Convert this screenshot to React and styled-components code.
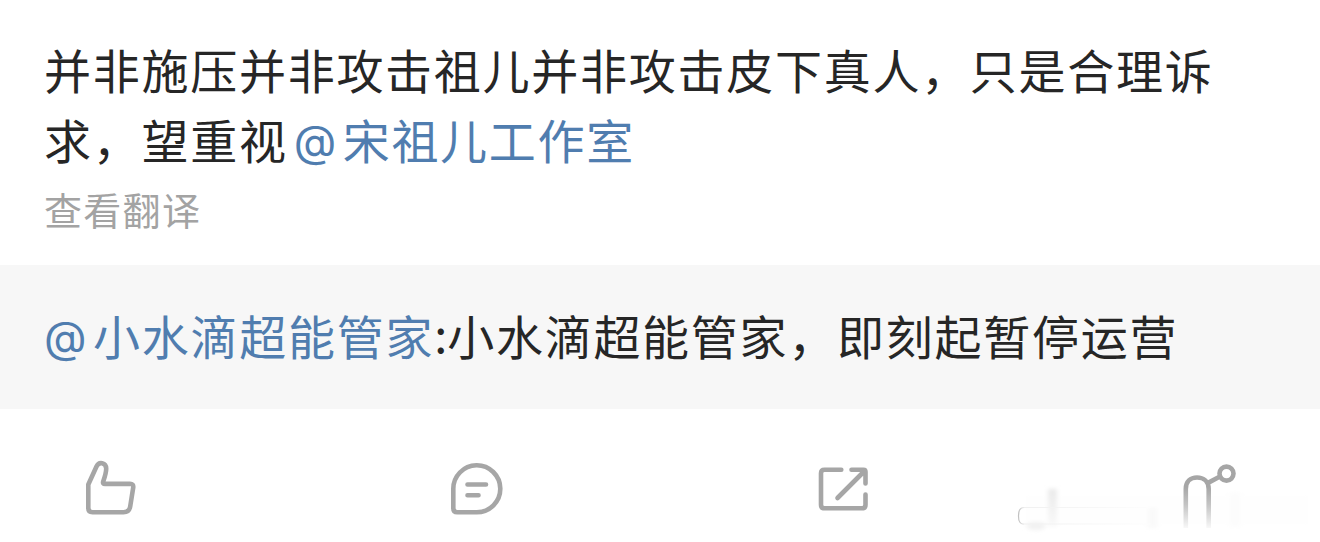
import React from "react";
import styled, { createGlobalStyle } from "styled-components";


const App = () => {
    return (
        <>
            <GlobalStyle/>
            <Post>
                <Content>
                    <Text>并非施压并非攻击祖儿并非攻击皮下真人，只是合理诉<br/>
                        求，望重视<Mention><At>@</At>宋祖儿工作室</Mention>
                    </Text>
                    <Translate>查看翻译</Translate>
                </Content>
                <Quote>
                    <Text>
                        <Mention><At $first>@</At>小水滴超能管家</Mention><Colon>:</Colon>小水滴超能管家，即刻起暂停运营
                    </Text>
                </Quote>
                <Actions>
                    <LikeIcon/>
                    <CommentIcon/>
                    <ShareIcon/>
                    <MoreIcon/>
                </Actions>
            </Post>
        </>
    )
}

//icons
const LikeIcon = () => (
    <Icon $width={80} viewBox="0 0 80 80">
        <path d="M18.3 34.5 L26.5 16.5 C29 11 36 12.5 36.2 18.5 C36.3 22.5 34.8 27 33.2 31.5 Q32.4 33.9 35 33.9 H60 Q63.8 33.9 63.2 37.6 L60.2 56.5 Q59.2 62.2 53.5 62.2 H22.5 Q18.3 62.2 18.3 58 Z"/>
    </Icon>
)

const CommentIcon = () => (
    <Icon $width={80} viewBox="0 0 80 80">
        <path d="M17.3 39.3 A23.5 23.5 0 1 1 40.8 62.3 H21.3 Q17.3 62.3 17.3 58.3 Z"/>
        <path d="M31.5 34.5 H50 M31.5 45.2 H42.5"/>
    </Icon>
)

const ShareIcon = () => (
    <Icon $width={80} viewBox="0 0 80 80">
        <path d="M38.3 19.8 H21.5 Q18 19.8 18 23.3 V54.8 Q18 58.3 21.5 58.3 H59 Q62.5 58.3 62.5 54.8 V44.5"/>
        <path d="M48.5 19.8 H60.5 Q62.5 19.8 62.5 21.8 V33.5 M61.5 21 L34.5 48"/>
    </Icon>
)

//the lower part fades out under a washed out watermark
const MoreIcon = () => (
    <Icon $width={320} viewBox="0 0 320 92">
        <defs>
            <linearGradient id="fade" gradientUnits="userSpaceOnUse" x1="0" y1="25" x2="0" y2="79">
                <stop offset="0.22" stopColor="#a6a6a6"/>
                <stop offset="0.55" stopColor="#c4c4c4"/>
                <stop offset="1" stopColor="#fafafa"/>
            </linearGradient>
            <linearGradient id="stem" x1="0" y1="0" x2="0" y2="1">
                <stop offset="0" stopColor="#e9e9e9"/>
                <stop offset="1" stopColor="#fafafa"/>
            </linearGradient>
            <linearGradient id="line" gradientUnits="userSpaceOnUse" x1="18" y1="0" x2="150" y2="0">
                <stop offset="0" stopColor="#bdbdbd"/>
                <stop offset="0.05" stopColor="#f0f0f0"/>
                <stop offset="1" stopColor="#fdfdfd"/>
            </linearGradient>
            <filter id="soft" x="-20%" y="-20%" width="140%" height="140%">
                <feGaussianBlur stdDeviation="2"/>
            </filter>
        </defs>
        <g stroke="none" filter="url(#soft)">
            <rect x="24" y="44" width="286" height="32" fill="#fefefe"/>
            <rect x="48" y="39" width="9" height="38" fill="url(#stem)"/>
            <ellipse cx="36" cy="76" rx="10" ry="4" fill="#f1f1f1"/>
            <rect x="148" y="58" width="9" height="20" fill="#f9f9f9"/>
            <rect x="230" y="42" width="10" height="35" fill="#fcfcfc"/>
        </g>
        <WatermarkLine d="M150 57.5 H24 Q18.5 57.5 18.5 66 T24 74 H150"/>
        <FadedStroke d="M185.8 78 V39 C185.8 31.5 190.5 27.5 197 27.5 S208.7 31.5 208.7 39 V78"/>
        <path d="M208.5 32.6 L219.5 26.8"/>
        <circle cx="226.5" cy="23.6" r="7"/>
    </Icon>
)


//styling
const GlobalStyle = createGlobalStyle`
    body {
        margin: 0;
        background-color: #fff;
        overflow: hidden;
    }
`
const Post = styled.div`
    width: 1320px;
    height: 542px;
    overflow: hidden;
    font-family: "Noto Sans CJK SC", "Noto Sans", sans-serif;
    background-color: #fff;
`
const Content = styled.div`
    height: 265px;
    box-sizing: border-box;
    padding: 34px 0 0 44px;
`
const Text = styled.div`
    font-size: 47px;
    line-height: 70px;
    letter-spacing: 1.73px;
    color: #262626;
    white-space: nowrap;
`
const Mention = styled.span`
    color: #507daf;
`
const At = styled.span`
    display: inline-block;
    box-sizing: border-box;
    width: ${({ $first }) => $first ? "49px" : "55px"};
    padding-left: ${({ $first }) => $first ? "0" : "6px"};
    font-family: "Inter", sans-serif;
    font-size: 44px;
    line-height: 1;
    letter-spacing: 0;
    transform: translateY(-2px);
`
const Colon = styled.span`
    display: inline-block;
    line-height: 1;
    letter-spacing: 0;
    transform: translateY(-2px);
`
const Translate = styled.div`
    margin-top: 7px;
    font-size: 38px;
    line-height: 56px;
    letter-spacing: 1.3px;
    color: #a3a3a3;
`
const Quote = styled.div`
    box-sizing: border-box;
    height: 144px;
    padding: 35px 0 0 44px;
    background-color: #f7f7f7;
`
const Actions = styled.div`
    display: grid;
    grid-template-columns: 366px 367px 197px 320px;
    align-items: start;
    height: 92px;
    padding: 41px 0 0 70px;
`
const Icon = styled.svg`
    width: ${({ $width }) => $width}px;
    fill: none;
    stroke: #a6a6a6;
    stroke-width: 4.6;
    stroke-linecap: round;
    stroke-linejoin: round;
`
const WatermarkLine = styled.path`
    stroke: url(#line);
    stroke-width: 1.2;
`
const FadedStroke = styled.path`
    stroke: url(#fade);
    stroke-linecap: butt;
`
export default App;
